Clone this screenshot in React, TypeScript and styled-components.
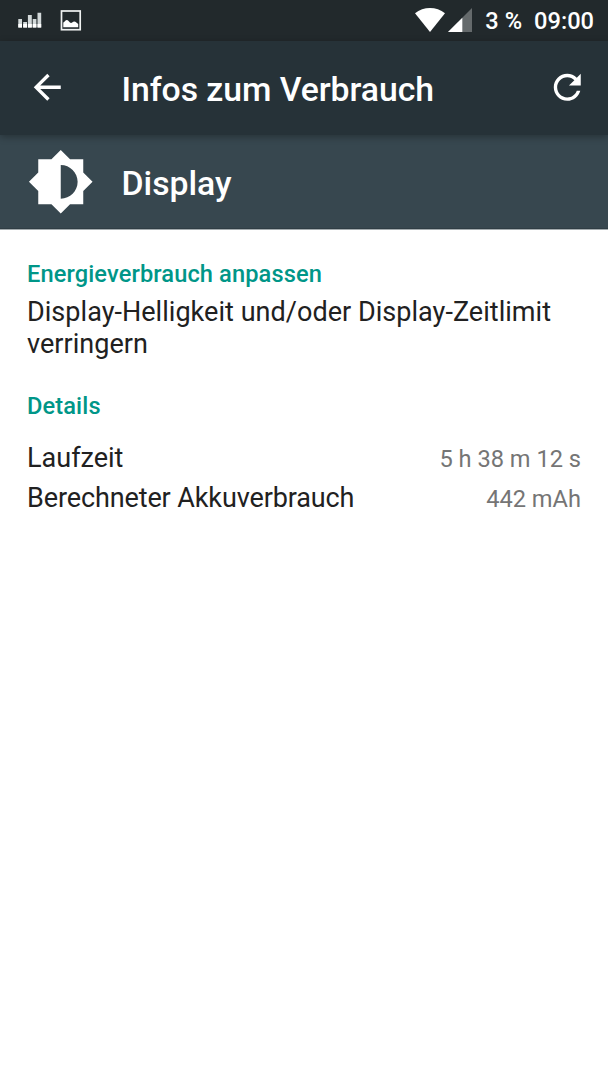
import React from 'react';
import styled, { createGlobalStyle } from 'styled-components';

const GlobalStyle = createGlobalStyle`
  body {
    margin: 0;
    background: #fff;
    font-family: Roboto, sans-serif;
    -webkit-font-smoothing: antialiased;
  }
`;

const Screen = styled.main`
  display: flex;
  flex-direction: column;
  min-height: 1080px;
  background: #fff;
`;

const StatusBar = styled.div`
  display: flex;
  align-items: flex-start;
  justify-content: space-between;
  height: 41px;
  box-sizing: border-box;
  padding: 0 14px 0 18px;
  background: #22292c;
`;

const StatusGroup = styled.div`
  display: flex;
  align-items: flex-start;
`;

const StatusIcon = styled.svg<{ $top: number; $after: number }>`
  display: block;
  margin-top: ${(p) => p.$top}px;
  margin-right: ${(p) => p.$after}px;
`;

const StatusText = styled.span<{ $after?: number }>`
  margin-right: ${(p) => p.$after ?? 0}px;
  padding-top: 1px;
  font-size: 23.64px;
  font-weight: 500;
  line-height: 40px;
  white-space: nowrap;
  color: #fff;
`;

const AppBar = styled.header`
  position: relative;
  display: flex;
  align-items: center;
  height: 94px;
  box-sizing: border-box;
  padding: 0 21px 1px 27px;
  background: #263238;
  box-shadow: 0 2px 7px rgba(0, 0, 0, 0.3);
`;

const BarButton = styled.button`
  display: flex;
  padding: 0;
  border: 0;
  background: none;
`;

const Title = styled.h1<{ $indent: string; $drop: number; $tracking?: string }>`
  flex: 1;
  margin: 0 0 0 ${(p) => p.$indent};
  padding-top: ${(p) => p.$drop}px;
  font-size: 33.78px;
  font-weight: 500;
  line-height: 40px;
  letter-spacing: ${(p) => p.$tracking ?? 'normal'};
  color: #fff;
`;

const Subject = styled.div`
  display: flex;
  align-items: center;
  height: 95px;
  box-sizing: border-box;
  padding-left: 27px;
  background: #37474f;
  border-bottom: 1px solid #a3abae;
  box-shadow: inset 0 -1px #2f3d44;
`;

const Content = styled.section`
  display: flex;
  flex-direction: column;
  padding: 30px 27px 0;
`;

const SectionTitle = styled.h2`
  margin: 0;
  font-size: 23.64px;
  font-weight: 500;
  line-height: 28px;
  letter-spacing: 0.11px;
  color: #009688;
`;

const Advice = styled.p`
  margin: 8px 0 32px;
  font-size: 27.02px;
  line-height: 32px;
  letter-spacing: 0.03px;
  color: #212121;
`;

const DetailList = styled.dl`
  margin: 18px 0 0;
`;

const DetailRow = styled.div`
  display: flex;
  align-items: baseline;
  justify-content: space-between;
  height: 40px;
`;

const Label = styled.dt<{ $tracking: string }>`
  font-size: 27.02px;
  line-height: 40px;
  letter-spacing: ${(p) => p.$tracking};
  color: #212121;
`;

const Value = styled.dd`
  margin: 0;
  font-size: 23.64px;
  line-height: 28px;
  color: #757575;
`;

const details = [
  { label: 'Laufzeit', value: '5 h 38 m 12 s', tracking: 'normal' },
  { label: 'Berechneter Akkuverbrauch', value: '442 mAh', tracking: '-0.12px' },
];

export default function App() {
  return (
    <Screen>
      <GlobalStyle />
      <StatusBar>
        <StatusGroup>
          <StatusIcon $top={12} $after={18} width="24" height="16" viewBox="0 0 24 16">
            <path d="M.3 7H4v8.600H.3zM5.200 10H9v5.600H5.200zM9.900 3h3.900v12.600H9.900zM14.700 7h3.700v8.600h-3.700zM19.500 .7h3.700v14.900h-3.700z" fill="#d3d9da" />
            <path d="M.3 12H4v3.600H.3zM5.200 12H9v3.600H5.200zM9.900 12h3.900v3.600H9.900zM14.700 12h3.700v3.600h-3.700zM19.500 12h3.700v3.600h-3.700z" fill="#fff" />
          </StatusIcon>
          <StatusIcon $top={10} $after={0} width="22" height="21" viewBox="0 0 22 21">
            <rect x="1.500" y="1" width="18.700" height="18.700" fill="none" stroke="#f0f2f2" strokeWidth="1.700" />
            <path d="M3.300 17.300V12.500C4.500 12 5.500 10 7 10c1.500 0 2.500 3 4 3 1.200 0 1.800-1.600 3.200-1.600 1.600 0 2.800 1.600 4 2.600v3.300z" fill="#fff" />
          </StatusIcon>
        </StatusGroup>
        <StatusGroup>
          <StatusIcon $top={8} $after={3} width="30" height="24" viewBox="0 0 30 24">
            <path d="M0 5.300C8.500-1.700 21.500-1.700 30 5.300L15 24z" fill="#fff" />
          </StatusIcon>
          <StatusIcon $top={8} $after={13} width="24" height="24" viewBox="0 0 24 24">
            <path d="M0 24L24 0V24z" fill="#656a6c" />
            <path d="M0 24L14.300 9.700V24z" fill="#fff" />
          </StatusIcon>
          <StatusText $after={12}>3 %</StatusText>
          <StatusText>09:00</StatusText>
        </StatusGroup>
      </StatusBar>
      <AppBar>
        <BarButton aria-label="Zurück">
          <svg width="40.500" height="40.500" viewBox="0 0 24 24" fill="#fff">
            <path d="M20 11H7.830l5.590-5.590L12 4l-8 8 8 8 1.410-1.410L7.830 13H20v-2z" />
          </svg>
        </BarButton>
        <Title $indent="54px" $drop={4} $tracking="-0.06px">Infos zum Verbrauch</Title>
        <BarButton aria-label="Aktualisieren">
          <svg width="40.500" height="40.500" viewBox="0 0 24 24" fill="#fff">
            <path d="M17.650 6.350C16.200 4.900 14.210 4 12 4c-4.420 0-7.990 3.580-7.990 8s3.570 8 7.990 8c3.730 0 6.840-2.550 7.730-6h-2.080c-.820 2.330-3.040 4-5.650 4-3.310 0-6-2.690-6-6s2.690-6 6-6c1.660 0 3.140.690 4.220 1.780L13 11h7V4l-2.350 2.350z" />
          </svg>
        </BarButton>
      </AppBar>
      <Subject>
        <svg width="67.500" height="67.500" viewBox="0 0 24 24" fill="#fff">
          <path d="M20 15.310L23.310 12 20 8.690V4h-4.690L12 .690 8.690 4H4v4.690L.690 12 4 15.310V20h4.690L12 23.310 15.310 20H20v-4.690zM12 18V6c3.310 0 6 2.690 6 6s-2.690 6-6 6z" />
        </svg>
        <Title as="h2" $indent="27px" $drop={4}>Display</Title>
      </Subject>
      <Content>
        <SectionTitle>Energieverbrauch anpassen</SectionTitle>
        <Advice>Display-Helligkeit und/oder Display-Zeitlimit verringern</Advice>
        <SectionTitle>Details</SectionTitle>
        <DetailList>
          {details.map((d) => (
            <DetailRow key={d.label}>
              <Label $tracking={d.tracking}>{d.label}</Label>
              <Value>{d.value}</Value>
            </DetailRow>
          ))}
        </DetailList>
      </Content>
    </Screen>
  );
}
